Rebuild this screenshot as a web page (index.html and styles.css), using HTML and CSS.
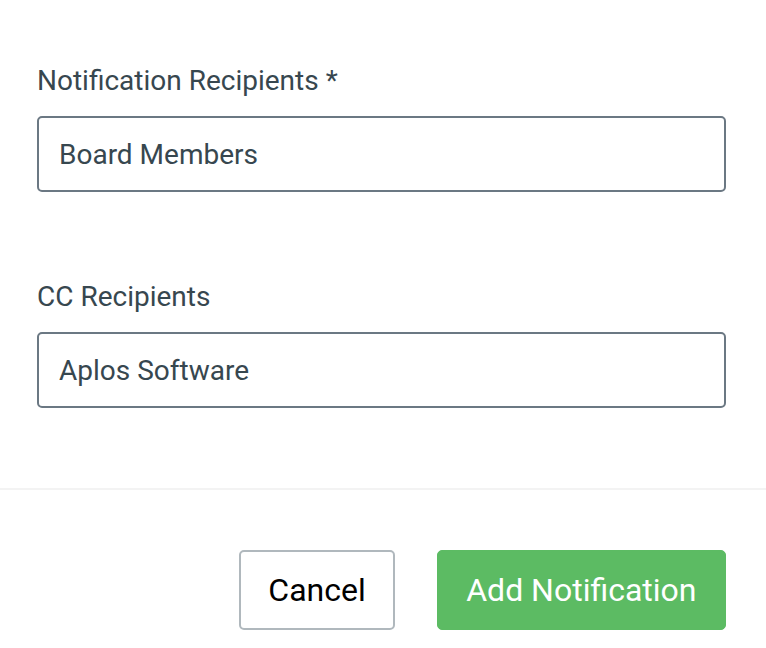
FILE: index.html
```html
<!DOCTYPE html>
<html lang="en">
<head>
  <meta charset="UTF-8" />
  <meta name="viewport" content="width=device-width,initial-scale=1.0" />
  <title>Add Notification</title>
  <link rel="stylesheet" href="styles.css">
</head>
<body>
  <main class="modal">
    <form class="modal-body">
      <div class="field">
        <label class="field-label" for="recipients">Notification Recipients *</label>
        <input class="field-input" id="recipients" type="text" value="Board Members">
      </div>
      <div class="field">
        <label class="field-label" for="cc">CC Recipients</label>
        <input class="field-input" id="cc" type="text" value="Aplos Software">
      </div>
    </form>
    <footer class="modal-footer">
      <button class="btn btn-default" type="button">Cancel</button>
      <button class="btn btn-success" type="button">Add Notification</button>
    </footer>
  </main>
</body>
</html>
```

FILE: styles.css
```css
body {
  margin: 0;
  background: #ffffff;
  font-family: Roboto, "Liberation Sans", sans-serif;
  color: #37474f;
}
.modal { width: 766px; }
.modal-body {
  margin: 0;
  padding: 63px 40px 0 37px;
  display: flex;
  flex-direction: column;
  gap: 87px;
  height: 488px;
  box-sizing: border-box;
}
.field { display: flex; flex-direction: column; gap: 18px; }
.field-label { font-size: 28px; line-height: 35px; }
.field-input {
  height: 76px;
  box-sizing: border-box;
  border: 2px solid #6b7883;
  border-radius: 5px;
  padding: 0 20px;
  font-family: inherit;
  font-size: 28px;
  color: #37474f;
  outline: none;
}
.modal-footer {
  border-top: 2px solid #f3f3f3;
  display: flex;
  justify-content: flex-end;
  gap: 42px;
  padding: 60px 40px 0 0;
}
.btn {
  height: 80px;
  border-radius: 5px;
  font-family: inherit;
  font-size: 32px;
  cursor: pointer;
}
.btn-default {
  background: #ffffff;
  border: 2px solid #b0b8bd;
  color: #000000;
  padding: 0 27px;
}
.btn-success {
  background: #5cbb63;
  border: 1px solid #5cbb63;
  color: #ffffff;
  padding: 0 28.5px;
}
```
